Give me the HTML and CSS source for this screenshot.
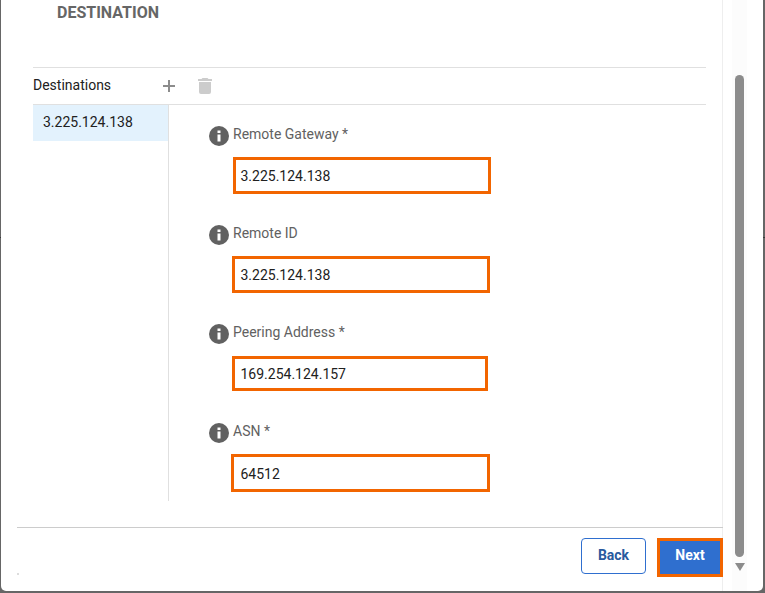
FILE: index.html
```html
<!DOCTYPE html>
<html lang="en">
<head>
<meta charset="utf-8">
<title>Destination</title>
<link rel="stylesheet" href="styles.css">
</head>
<body>
<div class="window">
  <main class="main">
    <h2 class="title">DESTINATION</h2>
    <section class="section">
      <div class="toolbar">
        <span class="toolbar-label">Destinations</span>
        <svg class="tool-add" width="14" height="14" viewBox="0 0 14 14"><path d="M6 1h2v5h5v2H8v5H6V8H1V6h5z"/></svg>
        <svg class="tool-del" width="14" height="16" viewBox="0 0 14 16"><path d="M4.5 0h5l1 1H14v2H0V1h3.5zM1 4h12v10a2 2 0 0 1-2 2H3a2 2 0 0 1-2-2z"/></svg>
      </div>
      <div class="body">
        <aside class="list"><div class="list-item">3.225.124.138</div></aside>
        <form class="form">
          <div class="row">
            <div class="head"><svg class="info" width="20" height="20" viewBox="0 0 20 20"><circle class="info-disc" cx="10" cy="10" r="10"/><path class="info-mark" d="M8.500 4.500h3v2.600h-3zM8.500 8.600h3v6.900h-3z"/></svg><label class="label">Remote Gateway *</label></div>
            <div class="field field-a">3.225.124.138</div>
          </div>
          <div class="row">
            <div class="head"><svg class="info" width="20" height="20" viewBox="0 0 20 20"><circle class="info-disc" cx="10" cy="10" r="10"/><path class="info-mark" d="M8.500 4.500h3v2.600h-3zM8.500 8.600h3v6.900h-3z"/></svg><label class="label">Remote ID</label></div>
            <div class="field field-b">3.225.124.138</div>
          </div>
          <div class="row">
            <div class="head head-wide"><svg class="info" width="20" height="20" viewBox="0 0 20 20"><circle class="info-disc" cx="10" cy="10" r="10"/><path class="info-mark" d="M8.500 4.500h3v2.600h-3zM8.500 8.600h3v6.900h-3z"/></svg><label class="label">Peering Address *</label></div>
            <div class="field field-c">169.254.124.157</div>
          </div>
          <div class="row">
            <div class="head"><svg class="info" width="20" height="20" viewBox="0 0 20 20"><circle class="info-disc" cx="10" cy="10" r="10"/><path class="info-mark" d="M8.500 4.500h3v2.600h-3zM8.500 8.600h3v6.900h-3z"/></svg><label class="label">ASN *</label></div>
            <div class="field field-d">64512</div>
          </div>
        </form>
      </div>
    </section>
    <footer class="footer">
      <button class="btn btn-back" type="button">Back</button>
      <button class="btn btn-next" type="button">Next</button>
    </footer>
  </main>
  <div class="scrollbar">
    <div class="track">
      <div class="thumb"></div>
      <div class="arrow"></div>
    </div>
  </div>
</div>
</body>
</html>
```
FILE: styles.css
```css
* { box-sizing: border-box; }
html, body { margin: 0; padding: 0; }
body {
  width: 765px;
  height: 593px;
  overflow: hidden;
  background: linear-gradient(#666 0 237px, #3a3a3a 237px 238px, #666 238px);
  font-family: Roboto, "Liberation Sans", sans-serif;
  font-size: 14px;
  color: #212121;
}
.window {
  display: flex;
  width: 762px;
  height: 591px;
  margin-left: 1px;
  background: #fff;
  border-radius: 0 0 5px 5px;
}
.main {
  display: flex;
  flex-direction: column;
  width: 722px;
  border-right: 1px solid #eee;
}
.title {
  height: 67px;
  margin: 0;
  padding: 5px 0 0 56px;
  font-size: 16px;
  line-height: 16px;
  font-weight: 700;
  color: #666;
}
.section {
  margin: 0 16px 0 32px;
  border-top: 1px solid #e0e0e0;
}
.toolbar {
  display: flex;
  align-items: center;
  height: 37px;
  border-bottom: 1px solid #e0e0e0;
}
.toolbar-label { width: 129px; padding-bottom: 2px; line-height: 16px; }
.tool-add { fill: #8c8c8c; }
.tool-del { fill: #ccc; margin-left: 22px; }
.body { display: flex; height: 396px; }
.list {
  width: 136px;
  border-right: 1px solid #e0e0e0;
}
.list-item {
  height: 36px;
  padding: 9px 0 0 10px;
  line-height: 16px;
  background: #e3f2fd;
}
.form { padding: 21px 0 0 40px; }
.row + .row { margin-top: 32px; }
.head { display: flex; height: 20px; margin-bottom: 11px; }
.head-wide { margin-bottom: 12px; }
.info { flex: none; margin-right: 4px; }
.info-disc { fill: #616161; }
.info-mark { fill: #fff; }
.label { line-height: 16px; color: #616161; }
.field {
  height: 37px;
  border: 3px solid #f26500;
  line-height: 32px;
  background: #fff;
}
.field-a { width: 258px; margin-left: 24px; padding-left: 4.5px; }
.field-b { width: 258px; margin-left: 23px; padding-left: 5.5px; }
.field-c { width: 256px; height: 35px; margin-left: 23px; padding-left: 5.5px; line-height: 31px; }
.field-d { width: 259px; height: 38px; margin-left: 22px; padding-left: 6.5px; line-height: 34px; }
.row:nth-child(2) { margin-top: 31px; }
.row:nth-child(3) { margin-top: 31px; }
.footer {
  position: relative;
  display: flex;
  align-items: flex-start;
  justify-content: flex-end;
  gap: 11px;
  margin: 26px -1px 0 16px;
  padding-top: 10px;
  border-top: 1px solid #ccc;
}
.footer::before {
  content: "";
  position: absolute;
  left: 0;
  top: 45px;
  width: 2px;
  height: 2px;
  background: #ddd;
}
.btn {
  font-family: inherit;
  font-size: 14px;
  font-weight: 700;
  border-radius: 4px;
  cursor: pointer;
}
.btn-back {
  width: 65px;
  height: 36px;
  padding: 0 0 2px;
  border: 1px solid #2f6fcf;
  background: #fff;
  color: #2a5a9e;
}
.btn-next {
  width: 66px;
  height: 39px;
  padding: 0 0 5px;
  border: 3px solid #f26500;
  border-radius: 0;
  background: #2f6fcf;
  color: #fff;
}
.scrollbar { flex: 1; padding-left: 9px; }
.track {
  display: flex;
  flex-direction: column;
  align-items: flex-start;
  width: 15px;
  height: 100%;
  padding: 75px 0 0 3px;
  background: #fcfcfc;
}
.thumb {
  width: 9px;
  height: 482px;
  border-radius: 5px;
  background: #8c8c8c;
}
.arrow {
  width: 0;
  height: 0;
  margin-top: 6px;
  border-style: solid;
  border-width: 8px 5px 0;
  border-color: #8c8c8c transparent transparent;
}
```
